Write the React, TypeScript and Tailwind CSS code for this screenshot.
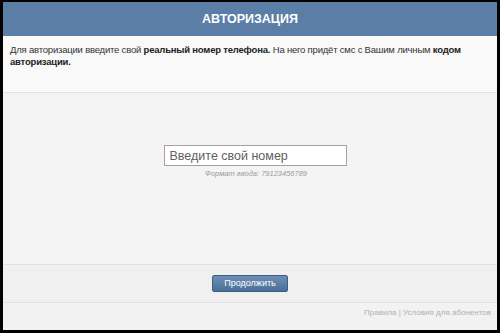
export default function App() {
  return (
    <div className="h-[333px] w-[500px] bg-black pb-[3px] pl-[3px] pr-[3px] pt-[2px]">
      <div className="flex h-full flex-col bg-[#f4f4f4] font-['Liberation_Sans',sans-serif]">
        {/* Шапка */}
        <div className="flex h-[34px] items-center justify-center bg-[#5a7ea6]">
          <h1 className="text-[12.5px] font-bold text-white">АВТОРИЗАЦИЯ</h1>
        </div>

        {/* Описание */}
        <div className="h-[57px] border-b border-[#dfe3e6] bg-[#f9f9f9] px-[7px] pt-[8px] text-[9.5px] leading-[12px] tracking-[-0.2px] text-[#333]">
          <p>
            Для авторизации введите свой <b className="text-[#222]">реальный номер телефона.</b> На него придёт смс с
            Вашим личным <b className="text-[#222]">кодом авторизации.</b>
          </p>
        </div>

        {/* Ввод номера */}
        <div className="flex h-[172px] flex-col items-center border-b border-[#dfe3e6] bg-[#f4f4f4] pt-[52px]">
          <input
            className="ml-[10px] h-[21px] w-[183px] border border-[#a3a3a3] bg-white px-[5px] text-[12.5px] text-[#555] outline-none placeholder:text-[#5e5e5e]"
            placeholder="Введите свой номер"
          />
          <p className="ml-[12px] mt-[2px] text-[7.5px] italic text-[#9a9a9a]">Формат ввода: 79123456789</p>
        </div>

        {/* Кнопка */}
        <div className="flex h-[38px] items-center justify-center border-b border-[#dfe3e6] bg-[#f0f0f0]">
          <button className="h-[17px] w-[76px] rounded-[2px] border border-[#3d5f86] bg-gradient-to-b from-[#6e8fb5] to-[#4b6f99] text-[9px] text-white">
            Продолжить
          </button>
        </div>

        {/* Подвал */}
        <div className="flex flex-1 items-start justify-end bg-[#f2f2f2] pr-[6px] pt-[4px] text-[8px] text-[#b0b0b0]">
          Правила | Условия для абонентов
        </div>
      </div>
    </div>
  );
}
